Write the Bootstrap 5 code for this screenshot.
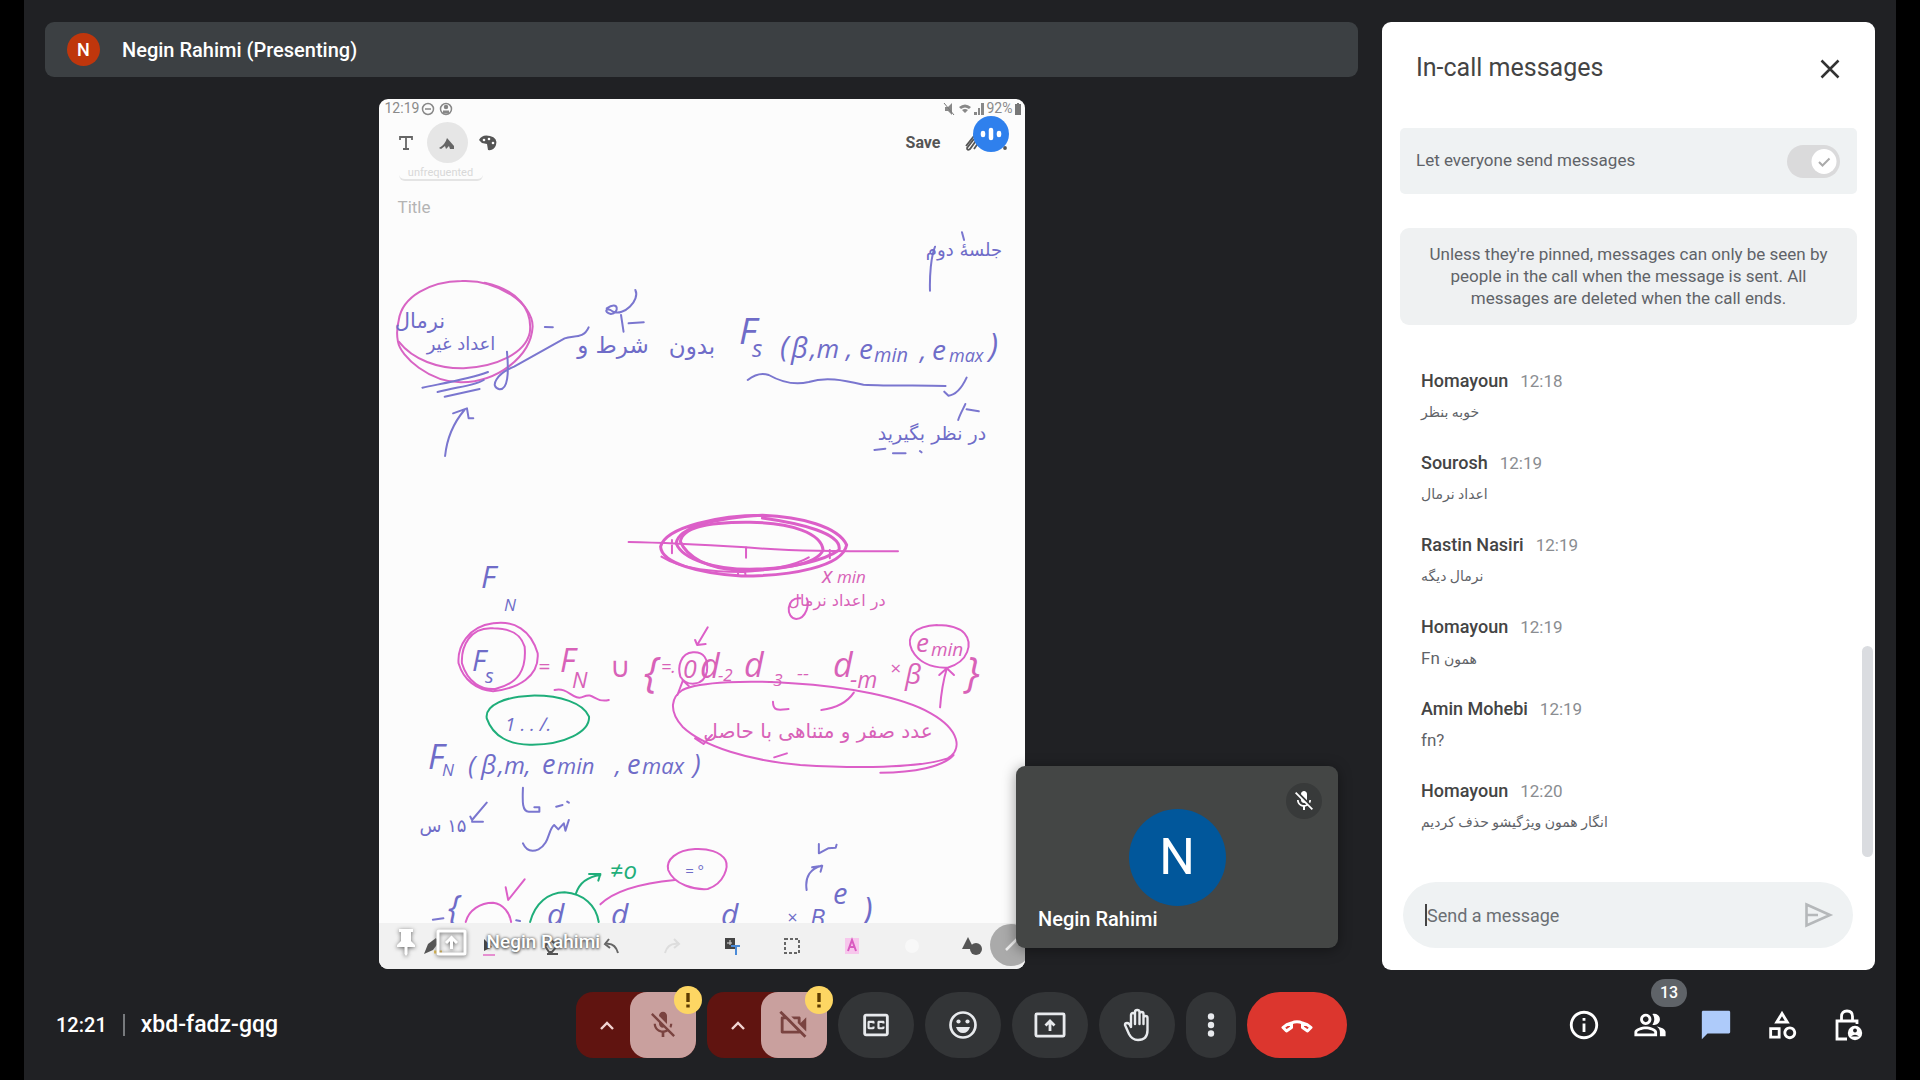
<!DOCTYPE html>
<html lang="en">
<head>
<meta charset="utf-8">
<meta name="viewport" content="width=device-width, initial-scale=1">
<title>Meet - xbd-fadz-gqg</title>
<link href="https://cdn.jsdelivr.net/npm/bootstrap@5.3.0/dist/css/bootstrap.min.css" rel="stylesheet">
<style>
body{background:#000;font-family:Roboto,"DejaVu Sans",sans-serif;color:#3c4043}
.meet{background:#202124;margin:0 24px;padding:0 21px}
.call-main{padding-top:22px;gap:24px}
.stage{gap:22px}
.presenter{background:#3c4043;border-radius:9px;height:55px;padding:0 22px;gap:22px;color:#fff;font-size:20px;font-weight:500}
.initial{width:33px;height:33px;border-radius:50%;background:#bf360c;font-size:18px;font-weight:500}
/* shared tablet screen */
.tablet{aspect-ratio:646/870;width:646px;background:#fcfcfc;border-radius:9px;overflow:hidden;color:#555}
.ink{inset:0;width:100%;height:100%}
.ink .pen{fill:none;stroke-width:2;stroke-linecap:round;stroke-linejoin:round}
.ink .pen path{vector-effect:non-scaling-stroke}
.ink text{font-family:"Open Sans","DejaVu Sans",sans-serif;font-style:italic}
.ink .fa{font-family:"DejaVu Sans",sans-serif;font-style:normal;direction:rtl;text-anchor:middle}
.status{height:19px;padding:0 3px 0 6px;font-size:14px;color:#8a8a8a}
.tabtools{height:49px;padding:0 14px 0 7px;color:#555}
.tabtools button,.tabfoot button{border:0;background:none;padding:0;color:inherit;line-height:1}
.tool-round{width:41px;height:41px;border-radius:50%}
.tool-round.on{background:#e6e6e6!important}
.save-btn{font-size:16px;font-weight:700}
.assist{width:36px;height:36px;border-radius:50%;background:#2f80ed;right:16px;top:17px}
.chip{width:84px;height:14px;margin-left:20px;border-bottom:2px solid #e4e4e4;border-radius:6px;font-size:11px;line-height:12px;color:#d8d8d8}
.note-title{margin:14px 19px;font-size:17px;color:#b4b4b4}
.tabfoot{height:46px;background:#f1f1f1;padding:0 40px 0 43px;color:#555}
.pinrow{left:17px;bottom:13px;gap:20px;color:#fff;font-size:19px;font-weight:500;line-height:28px;text-shadow:0 1px 3px #444,0 0 3px #666}
.pinrow svg{filter:drop-shadow(0 1px 2px #666)}
.round-pen{width:42px;height:42px;border-radius:50%;background:#aaa;right:-7px;bottom:3px}
/* self view */
.selfview{right:20px;bottom:22px;width:322px;height:182px;background:#444645;border-radius:9px;box-shadow:0 2px 14px #0006;color:#fff}
.selfview .big{width:97px;height:97px;border-radius:50%;background:#01579b;font-size:50px}
.muted{right:16px;top:17px;width:36px;height:36px;border-radius:50%;background:#383a3a}
.selfname{left:22px;bottom:16px;font-size:20px;line-height:26px;font-weight:500}
/* chat panel */
.chat{width:493px;background:#fff;border-radius:9px;padding:0 18px 22px}
.chat-head{padding:27px 17px 0 16px;margin-bottom:42px;height:64px;align-items:flex-start}
.chat-head h1{font-size:25px;line-height:38px;font-weight:400;color:#444}
.x-btn{width:38px;height:38px;border:0;background:none;padding:0;margin-right:-9px;color:#333}
.allow{height:66px;background:#eff2f3;border-radius:5px;padding:0 17px 0 16px;margin-bottom:34px;font-size:17px;color:#5f6368}
.allow .form-check-input{width:53px;height:33px;margin:0;border:0;border-radius:17px;background-color:#dadadb;background-size:53px 33px;background-position:center;
background-image:url("data:image/svg+xml,%3Csvg xmlns='http://www.w3.org/2000/svg' viewBox='0 0 53 33'%3E%3Ccircle cx='37' cy='16.5' r='12.5' fill='%23fff'/%3E%3Cpath d='M32 17l3.5 3.5 7-7' fill='none' stroke='%23aaa' stroke-width='2'/%3E%3C/svg%3E")!important}
.notice{background:#eff1f2;border-radius:9px;padding:15px 16px 16px;font-size:17px;line-height:22px;text-align:center;color:#5f6368;margin-bottom:43px}
.feed{padding:0 21px}
.msg{margin-bottom:32px;line-height:25px;height:50px}
.who{font-size:18px;font-weight:500;color:#444}
.msg time{font-size:17px;color:#8a8d91;margin-left:12px}
.body-txt{font-size:17px;color:#5f6368;padding-top:6px}
.body-txt[lang=fa],.body-txt [lang=fa]{font-size:14px}
.thumb{width:11px;height:211px;border-radius:6px;background:#dadce0;right:2px;bottom:113px}
.compose{height:66px;border-radius:33px;background:#eff2f3;margin:0 4px 0 3px;padding:0 18px 0 22px}
.compose .bar{width:2px;height:22px;background:#444}
.compose input{border:0;background:none;outline:0;padding:0;font-size:18px;min-width:0}
.compose input::placeholder{color:#6b6f73;opacity:1}
.compose button{border:0;background:none;padding:0}
/* bottom bar */
.dock{height:110px;color:#fff}
.dock-side{flex:1 1 0}
.clock{font-size:20px;font-weight:500;padding-left:11px}
.clock i{width:2px;height:22px;background:#777a7d;margin:0 16px}
.room-code{font-size:23px}
.ctl{gap:11px}
.ctl button,.right-tools button{border:0;padding:0;color:#e8eaed}
.pair{width:120px;height:66px;background:#601410;border-radius:17px}
.ctl .pair .arrow{width:54px;padding-left:8px;background:none;color:#f2d4d2}
.ctl .pair .off{width:66px;height:66px;background:#c9a09e;border-radius:17px;color:#7a4340}
.warn{width:28px;height:28px;border-radius:50%;background:#fdd663;right:-6px;top:-6px}
.pill{width:76px;height:66px;border-radius:33px;background:#333537}
.pill.slim{width:50px;border-radius:25px}
.ctl .hang{width:100px;height:66px;border-radius:33px;background:#dc362e;color:#fff}
.right-tools{padding-right:9px;gap:30px}
.right-tools button{width:36px;height:36px;background:none;color:#fff}
.count{font-size:16px;font-weight:500;background:#5f6368;border-radius:14px;height:28px;width:36px;line-height:28px;left:19px;top:-28px}
</style>
<script src="https://cdn.jsdelivr.net/npm/bootstrap@5.3.0/dist/js/bootstrap.bundle.min.js"></script>
</head>
<body>
<svg width="0" height="0" class="position-absolute" aria-hidden="true">
<symbol id="micoff" viewBox="0 0 24 24"><path fill="currentColor" d="M19 11h-1.7c0 .74-.16 1.43-.43 2.05l1.23 1.23c.56-.98.9-2.09.9-3.28zm-4.02.17c0-.06.02-.11.02-.17V5c0-1.66-1.34-3-3-3S9 3.34 9 5v.18l5.98 5.99zM4.27 3L3 4.27l6.01 6.01V11c0 1.66 1.33 3 2.99 3 .22 0 .44-.03.65-.08l1.66 1.66c-.71.33-1.5.52-2.31.52-2.76 0-5.3-2.1-5.3-5.1H5c0 3.41 2.72 6.23 6 6.72V21h2v-3.28c.91-.13 1.77-.45 2.54-.9L19.73 21 21 19.73 4.27 3z"/></symbol>
<symbol id="up" viewBox="0 0 16 10"><path d="M2 8l6-6 6 6" fill="none" stroke="currentColor" stroke-width="2.4"/></symbol>
<symbol id="bang" viewBox="0 0 28 28"><path d="M14 7v9M14 18.500v3" stroke="#5c3b00" stroke-width="3.400"/></symbol>
</svg>

<div class="meet min-vh-100 d-flex flex-column">
<main class="call-main d-flex flex-grow-1">
  <section class="stage d-flex flex-column flex-grow-1 position-relative">
    <header class="presenter d-flex align-items-center"><span class="initial d-flex align-items-center justify-content-center">N</span><span>Negin Rahimi (Presenting)</span></header>

    <div class="tablet position-relative d-flex flex-column mx-auto">
      <svg class="ink position-absolute" viewBox="378 99 646 870" role="img" aria-label="Handwritten lecture notes">
        <!-- upper half -->
        <g class="pen" transform="translate(370 90) scale(.42092 .33333)">
          <g stroke="#d864c4">
            <path d="M66 690C74 620 140 574 215 573C300 568 385 640 384 710C380 800 300 876 215 877C140 878 70 800 64 755C60 730 62 710 66 690"/>
            <path d="M66 755C100 810 160 836 220 835C300 830 365 790 377 730C385 660 350 600 270 578"/>
          </g>
          <g stroke="#7a76cf">
            <path d="M122 893C170 880 230 868 278 846M158 906C210 890 250 885 268 870M175 920L258 897"/>
            <path d="M176 1098C180 1050 195 1000 222 960M195 970L228 955L232 985L243 985"/>
            <path d="M323 785C328 850 325 900 305 898C280 890 300 850 340 830L460 745C480 735 505 748 517 712"/>
            <path d="M413 711L432 712M560 655C590 630 590 670 570 672C550 665 560 650 575 665C600 680 640 630 628 600M594 675L600 725M612 700L648 697"/>
            <path d="M895 870C915 850 930 848 945 855C980 880 1010 885 1040 876C1080 860 1120 870 1170 884C1230 888 1300 886 1365 888M1415 863C1405 890 1390 915 1372 917L1362 905"/>
            <path d="M1340 470C1330 500 1327 560 1328 602M1404 427L1409 450M1395 990C1400 970 1410 950 1412 942M1415 958L1444 964"/>
            <path d="M1196 1080L1222 1076M1240 1090L1270 1090M1304 1083L1308 1087"/>
          </g>
        </g>
        <g fill="#6f6cc8">
          <text class="fa" x="963" y="256" font-size="18">جلسهٔ دوم</text>
          <text class="fa" x="419" y="328" font-size="21">نرمال</text>
          <text class="fa" x="460" y="350" font-size="18">اعداد غیر</text>
          <text class="fa" x="691" y="354" font-size="23">بدون</text>
          <text class="fa" x="612" y="353" font-size="23">شرط و</text>
          <text class="fa" x="931" y="440" font-size="19">در نظر بگیرید</text>
          <text x="738" y="344" font-size="37">F<tspan x="751" y="357" font-size="24">s</tspan></text>
          <text x="779" y="357" font-size="30">(</text><text x="790" y="358" font-size="29">β</text><text x="809" y="358" font-size="26">,m</text><text x="845" y="358" font-size="26">,</text>
          <text x="858" y="359" font-size="28">e</text><text x="873" y="362" font-size="20">min</text><text x="919" y="360" font-size="26">,</text><text x="931" y="360" font-size="28">e</text><text x="948" y="362" font-size="18">max</text><text x="988" y="357" font-size="32">)</text>
        </g>
        <!-- lower half -->
        <g class="pen" transform="translate(370 490) scale(.42092 .33333)">
          <g stroke="#dc5fc8">
            <path d="M612 156C700 158 800 165 890 172C1000 184 1120 184 1252 184M891 172L891 203M715 150L715 190M1090 180L1090 205"/>
            <path stroke-width="3" d="M930 76C830 76 700 110 688 170C690 220 780 250 880 258C1000 258 1120 230 1130 165C1110 110 1020 80 930 76C820 84 730 110 725 160C740 210 820 238 900 238C1000 236 1080 210 1112 180C1120 130 1020 100 930 84"/>
            <path stroke-width="3" d="M735 155C740 110 810 96 900 97C1000 98 1070 130 1074 180C1060 225 960 244 870 240C800 236 750 200 735 155"/>
            <path d="M690 200C740 240 820 245 880 246C940 244 1010 225 1040 202M872 240L872 258L890 258L888 240"/>
            <path d="M290 400C230 410 205 470 208 520C220 570 250 600 290 604C350 595 400 560 396 490C380 420 340 390 290 400M290 415C235 410 214 470 216 520C230 580 265 600 295 597C350 580 370 540 365 470C355 430 330 415 290 415"/>
            <path d="M436 600C470 590 480 635 505 620C530 605 530 640 565 630M800 412L775 465L770 450M775 465L795 462"/>
            <path d="M765 487C735 490 728 530 735 560C750 590 790 590 798 545C802 505 790 485 765 487M740 575L728 615M740 570L755 588"/>
            <path d="M1345 405C1290 408 1270 440 1285 480C1300 515 1330 535 1370 533C1420 515 1430 460 1410 430C1395 410 1370 405 1345 405M1352 652C1355 600 1360 570 1368 535M1350 555L1368 535L1385 555"/>
            <path d="M740 600C780 575 900 570 1000 580C1130 590 1260 620 1330 670C1400 720 1405 780 1370 805C1300 835 1150 835 1020 825C900 812 790 770 740 710C705 660 715 620 740 600M1210 848C1290 848 1360 830 1384 795M1147 608C1130 640 1100 655 1070 660M955 635C955 665 970 660 992 657M958 802L988 790M770 745L790 762L810 735"/>
            <path d="M1020 325C985 320 985 385 1010 387C1035 385 1042 340 1035 325"/>
            <path d="M225 1296C232 1260 260 1238 290 1238C315 1242 330 1270 333 1296M320 1192L326 1230L365 1168"/>
            <path d="M770 1077C725 1080 700 1110 706 1140C720 1185 770 1200 800 1197C840 1180 850 1130 842 1110C830 1085 800 1075 770 1077M545 1243C580 1200 640 1180 722 1170"/>
          </g>
          <g stroke="#1fae7a">
            <path d="M380 617C320 620 270 645 275 685C290 740 330 765 380 764C460 765 520 725 518 680C505 640 450 615 380 617"/>
            <path d="M378 1296C390 1240 420 1208 460 1207C505 1212 535 1245 541 1296M487 1210C495 1180 515 1160 545 1155M518 1152L545 1152L540 1172"/>
          </g>
          <g stroke="#7a76cf">
            <path d="M275 938L240 990L236 980M240 995L266 995M361 893C360 930 358 965 375 965L400 965L400 952L388 952M440 950L455 945M466 935L470 938"/>
            <path d="M361 1060C370 1085 385 1085 398 1078C425 1060 420 1020 435 1005L445 1018L458 1000L462 1022L470 990M1035 1200C1030 1160 1045 1135 1070 1127M1048 1132L1072 1127L1068 1145M1064 1062L1064 1090L1086 1075L1104 1073L1106 1064"/>
            <path d="M147 1289L172 1285M345 1291L354 1293"/>
          </g>
        </g>
        <g fill="#6f6cc8">
          <text x="480" y="588" font-size="31">F</text><text x="503" y="611" font-size="17">N</text>
          <text x="471" y="671" font-size="29">F<tspan x="484" y="683" font-size="20">s</tspan></text>
          <text x="504" y="731" font-size="19">1 . . ∕.</text>
          <text x="427" y="769" font-size="34">F<tspan x="441" y="776" font-size="17">N</tspan></text>
          <text x="467" y="774" font-size="26">(</text><text x="480" y="774" font-size="26">β</text><text x="497" y="774" font-size="24">,m,</text><text x="541" y="774" font-size="27">e</text><text x="556" y="774" font-size="22">min</text><text x="614" y="774" font-size="24">,</text><text x="626" y="774" font-size="27">e</text><text x="641" y="774" font-size="22">max</text><text x="692" y="774" font-size="27">)</text>
          <text class="fa" x="442" y="832" font-size="18">۱۵ س</text>
          <text x="447" y="920" font-size="34">{</text><text x="546" y="925" font-size="30">d</text><text x="610" y="925" font-size="30">d</text><text x="720" y="925" font-size="30">d</text><text x="786" y="924" font-size="18">×</text><text x="809" y="927" font-size="25">B</text><text x="832" y="904" font-size="29">e</text><text x="862" y="922" font-size="34">)</text>
          <text x="684" y="876" font-size="15">= °</text>
        </g>
        <text x="609" y="879" font-size="24" fill="#1fae7a">≠o</text>
        <g fill="#d862b8">
          <text x="821" y="583" font-size="22">x</text><text x="836" y="583" font-size="17">min</text>
          <text class="fa" x="836" y="606" font-size="16">در اعداد نرمال</text>
          <text x="537" y="674" font-size="21">=</text><text x="559" y="672" font-size="32">F<tspan x="571" y="688" font-size="22">N</tspan></text><text x="609" y="677" font-size="28">∪</text>
          <text x="643" y="687" font-size="42">{</text><text x="660" y="673" font-size="18">=.</text><text x="682" y="678" font-size="25">0</text><text x="699" y="678" font-size="34">d</text><text x="717" y="681" font-size="17">-2</text><text x="743" y="677" font-size="34">d</text><text x="767" y="686" font-size="17">-3</text><text x="796" y="680" font-size="19">--</text><text x="832" y="677" font-size="34">d</text><text x="849" y="688" font-size="23">-m</text><text x="889" y="675" font-size="19">×</text><text x="904" y="684" font-size="28">β<tspan x="915" y="652" font-size="26">e</tspan><tspan x="930" y="656" font-size="19">min</tspan></text><text x="964" y="687" font-size="42">}</text>
          <text class="fa" x="817" y="738" font-size="20">عدد صفر و متناهی با حاصل</text>
        </g>
      </svg>
      <div class="status d-flex align-items-center justify-content-between">
        <span class="d-flex align-items-center"><span>12:19</span>
          <svg width="38" height="16" viewBox="0 0 38 16" fill="none" stroke="#888" stroke-width="1.500"><circle cx="9" cy="8" r="5.500"/><path d="M6 8h6"/><circle cx="27" cy="8" r="5.500"/><circle cx="27" cy="6" r="1.500" fill="#777"/><path d="M24 11h6" stroke-width="3"/></svg></span>
        <span class="d-flex align-items-center"><svg width="44" height="14" viewBox="0 0 44 14" fill="#888"><path d="M2 5h3l4-4v12L5 9H2zM16 5q6-5 12 0l-2 2q-4-3-8 0zM19 8q3-2 6 0l-3 3zM31 13h3v-3h-3zM35 13h2V6h-2zM38 13h3V1h-3z"/><path d="M1 1l10 12" stroke="#777"/></svg><span>92%</span><svg width="9" height="14"><path d="M2 2h2V1h2v1h2v11H2z" fill="#777"/></svg></span>
      </div>
      <div class="tabtools d-flex align-items-center justify-content-between">
        <div class="d-flex">
          <button class="tool-round" aria-label="Text"><svg width="16" height="16" viewBox="0 0 16 16" fill="none" stroke="#666" stroke-width="1.800"><path d="M2 5V2h12v3M8 2v12M5 14h6"/></svg></button>
          <button class="tool-round on" aria-label="Draw"><svg width="18" height="16" viewBox="0 0 18 16"><path d="M1 13Q7 10 9 3l7 8v3h-4l-1-3-3 3-1-3-4 3z" fill="#666"/></svg></button>
          <button class="tool-round" aria-label="Palette"><svg width="20" height="18" viewBox="0 0 20 18"><path d="M1 6Q4 0 12 2q8 2 6 9-2 6-8 5l-1-6-5-1z" fill="#555"/><g fill="#fff"><circle cx="6" cy="6" r="1.300"/><circle cx="11" cy="5" r="1.300"/><circle cx="15" cy="9" r="1.300"/></g></svg></button>
        </div>
        <div class="d-flex align-items-center"><button class="save-btn me-4">Save</button>
          <svg width="46" height="22" viewBox="0 0 46 22" fill="none" stroke="#555" stroke-width="1.800"><path d="M1 14L9 4q4-2 4 2L5 17q-3 2-3-1l7-9M9 17l7-10"/><circle cx="40" cy="16" r="1"/></svg></div>
      </div>
      <div class="chip text-center">unfrequented</div>
      <div class="note-title">Title</div>
      <div class="assist position-absolute"><svg class="d-block" width="36" height="36" viewBox="0 0 36 36" stroke="#fff" stroke-width="4.500" stroke-linecap="round"><path d="M10 17v2M18 14v8M26 17v2"/></svg></div>

      <div class="tabfoot mt-auto d-flex align-items-center justify-content-between position-relative">
        <button aria-label="Pen"><svg width="22" height="20" viewBox="0 0 22 20"><path d="M2 18L6 8l8-6 3 4-6 8z" fill="#555"/><path d="M12 16h8" stroke="#eac14d" stroke-width="3"/></svg></button>
        <button aria-label="Marker"><svg width="22" height="20" viewBox="0 0 22 20"><path d="M3 15V3l8 8z" fill="#444"/><path d="M2 19h12" stroke="#e58fd0" stroke-width="2"/></svg></button>
        <button aria-label="Eraser"><svg width="22" height="20" viewBox="0 0 22 20"><path d="M4 10l6-6 6 6-5 6H8zM6 18h11" fill="none" stroke="#555" stroke-width="2"/></svg></button>
        <button aria-label="Undo"><svg width="22" height="20" viewBox="0 0 22 20" fill="none" stroke="#666" stroke-width="2"><path d="M8 3L4 8l5 4M4 8q10-2 13 9"/></svg></button>
        <button aria-label="Redo"><svg width="22" height="20" viewBox="0 0 22 20" fill="none" stroke="#ddd" stroke-width="2"><path d="M13 3l5 5-5 4M18 8Q7 6 4 17"/></svg></button>
        <button aria-label="Convert"><svg width="22" height="22" viewBox="0 0 22 22"><path d="M4 3h10v11H4z" fill="#444"/><path d="M6 8h5M9 5v5" stroke="#ddd"/><path d="M10 11h9M15 11v9" stroke="#4b8bd8" stroke-width="2"/></svg></button>
        <button aria-label="Select"><svg width="22" height="20" viewBox="0 0 22 20"><path d="M4 3h14v14H4z" fill="none" stroke="#666" stroke-width="2" stroke-dasharray="3 2"/></svg></button>
        <button aria-label="Style"><svg width="22" height="22" viewBox="0 0 22 22"><path d="M4 3h14v16H4z" fill="#f7c6ec"/><path d="M7 16l4-11 4 11M8 12h6" fill="none" stroke="#d95bc0" stroke-width="2"/></svg></button>
        <button aria-label="Colour"><svg width="22" height="20" viewBox="0 0 22 20"><circle cx="11" cy="10" r="7" fill="#f8f8f8"/></svg></button>
        <button aria-label="Shapes"><svg width="24" height="22" viewBox="0 0 24 22" fill="#555"><path d="M8 2l6 12H2z"/><circle cx="16" cy="14" r="6"/></svg></button>
        <span class="round-pen position-absolute"><svg width="42" height="42" viewBox="0 0 42 42"><path d="M16 26L27 15" stroke="#eee" stroke-width="2.500"/></svg></span>
      </div>
      <div class="pinrow position-absolute d-flex align-items-center">
        <svg width="20" height="28" viewBox="0 0 20 28" fill="#fff"><path d="M3 1h14v3h-2v9l4 4v2h-7.500v7L10 28l-1.500-2v-7H1v-2l4-4V4H3z"/></svg>
        <svg width="31" height="27" viewBox="0 0 31 27" fill="none" stroke="#fff" stroke-width="3"><rect x="2" y="2" width="27" height="23" rx="1"/><path d="M15.500 20V9M10 14l5.500-5.500L21 14"/></svg>
        <span>Negin Rahimi</span>
      </div>
    </div>

    <div class="selfview position-absolute d-flex align-items-center justify-content-center">
      <span class="big d-flex align-items-center justify-content-center">N</span>
      <span class="muted position-absolute d-flex align-items-center justify-content-center"><svg width="24" height="24"><use href="#micoff"/></svg></span>
      <span class="selfname position-absolute">Negin Rahimi</span>
    </div>
  </section>

  <aside class="chat d-flex flex-column flex-shrink-0 position-relative">
    <div class="chat-head d-flex justify-content-between"><h1 class="m-0">In-call messages</h1>
      <button class="x-btn" aria-label="Close"><svg width="20" height="20" viewBox="0 0 20 20"><path d="M1.500 1.500l17 17M18.500 1.500l-17 17" stroke="currentColor" stroke-width="2.500"/></svg></button></div>
    <div class="allow d-flex align-items-center justify-content-between"><label for="allow">Let everyone send messages</label><input class="form-check-input" type="checkbox" role="switch" id="allow" checked></div>
    <p class="notice">Unless they're pinned, messages can only be seen by people in the call when the message is sent. All messages are deleted when the call ends.</p>
    <div class="feed">
      <div class="msg"><span class="who">Homayoun</span><time>12:18</time><div class="body-txt" lang="fa">خوبه بنظر</div></div>
      <div class="msg"><span class="who">Sourosh</span><time>12:19</time><div class="body-txt" lang="fa">اعداد نرمال</div></div>
      <div class="msg"><span class="who">Rastin Nasiri</span><time>12:19</time><div class="body-txt" lang="fa">نرمال دیگه</div></div>
      <div class="msg"><span class="who">Homayoun</span><time>12:19</time><div class="body-txt">Fn <span lang="fa">همون</span></div></div>
      <div class="msg"><span class="who">Amin Mohebi</span><time>12:19</time><div class="body-txt">fn?</div></div>
      <div class="msg"><span class="who">Homayoun</span><time>12:20</time><div class="body-txt" lang="fa">انگار همون ویژگیشو حذف کردیم</div></div>
    </div>
    <div class="thumb position-absolute"></div>
    <form class="compose d-flex align-items-center mt-auto"><span class="bar"></span><input class="flex-grow-1" type="text" placeholder="Send a message" aria-label="Send a message">
      <button type="button" aria-label="Send"><svg width="32" height="28" viewBox="0 0 32 28" fill="none" stroke="#b5b8ba" stroke-width="2.600"><path d="M3.500 3.500L27 14 3.500 24.500zM4 14h11"/></svg></button></form>
  </aside>
</main>

<footer class="dock d-flex align-items-center">
  <div class="dock-side clock d-flex align-items-center"><span>12:21</span><i></i><span class="room-code">xbd-fadz-gqg</span></div>
  <div class="ctl d-flex">
    <div class="pair d-flex position-relative"><button class="arrow" aria-label="Audio settings"><svg width="16" height="10"><use href="#up"/></svg></button><button class="off" aria-label="Microphone"><svg width="32" height="32"><use href="#micoff"/></svg></button><svg class="warn position-absolute"><use href="#bang"/></svg></div>
    <div class="pair d-flex position-relative"><button class="arrow" aria-label="Video settings"><svg width="16" height="10"><use href="#up"/></svg></button><button class="off" aria-label="Camera"><svg width="35" height="34" viewBox="0 0 24 24" fill="currentColor"><path d="M9.560 8l-2-2-4.150-4.140L2 3.270 4.730 6H4c-.55 0-1 .45-1 1v10c0 .55.45 1 1 1h12c.21 0 .39-.08.55-.18L19.730 21l1.410-1.410-8.860-8.860L9.560 8zM5 16V8h1.730l8 8H5zm10-8v2.610l6 6V6.500l-4 4V7c0-.55-.45-1-1-1h-5.610l2 2H15z"/></svg></button><svg class="warn position-absolute"><use href="#bang"/></svg></div>
    <button class="pill" aria-label="Captions"><svg width="34" height="34" viewBox="0 0 24 24" fill="currentColor"><path d="M19 4H5c-1.110 0-2 .9-2 2v12c0 1.100.89 2 2 2h14c1.100 0 2-.9 2-2V6c0-1.100-.9-2-2-2zm0 14H5V6h14v12zM7 15h3c.55 0 1-.45 1-1v-1H9.500v.5h-2v-3h2v.5H11v-1c0-.55-.45-1-1-1H7c-.55 0-1 .45-1 1v4c0 .55.45 1 1 1zm7 0h3c.55 0 1-.45 1-1v-1h-1.500v.5h-2v-3h2v.5H18v-1c0-.55-.45-1-1-1h-3c-.55 0-1 .45-1 1v4c0 .55.45 1 1 1z"/></svg></button>
    <button class="pill" aria-label="Reactions"><svg width="30" height="30" viewBox="0 0 30 30" fill="currentColor"><circle cx="15" cy="15" r="12.500" fill="none" stroke="currentColor" stroke-width="2.700"/><circle cx="10.500" cy="11.500" r="2.100"/><circle cx="19.500" cy="11.500" r="2.100"/><path d="M8 17h14q-2 6-7 6t-7-6z"/></svg></button>
    <button class="pill" aria-label="Present"><svg width="32" height="26" viewBox="0 0 32 26" fill="none" stroke="currentColor" stroke-width="2.800"><rect x="1.900" y="1.900" width="28.200" height="22.200" rx="1"/><path d="M16 19v-9M11.500 13.500L16 9l4.500 4.500"/></svg></button>
    <button class="pill" aria-label="Raise hand"><svg width="28" height="34" viewBox="0 0 28 34" fill="none" stroke="currentColor" stroke-width="2.400" stroke-linejoin="round" stroke-linecap="round"><path d="M8 19V7q0-2 2-2t2 2v9V4q0-2 2.200-2T16.500 4v12V6q0-2 2-2t2 2v10V10q0-2 2-2t2 2v12q0 10-9.500 10Q9 32 6 26L2 17q0-2 2-2 2.500 0 4 4z"/></svg></button>
    <button class="pill slim" aria-label="More"><svg width="8" height="24" viewBox="0 0 8 24" fill="currentColor"><circle cx="4" cy="3.500" r="3.200"/><circle cx="4" cy="12" r="3.200"/><circle cx="4" cy="20.500" r="3.200"/></svg></button>
    <button class="hang" aria-label="Leave call"><svg width="32" height="16" viewBox="0 0 32 16" fill="none" stroke="currentColor" stroke-width="3" stroke-linejoin="round"><path d="M10.500 5Q16 2.600 21.500 5M10.500 5v4.500L5.500 13 2 9.500Q5.500 6 10.500 5zM21.500 5v4.500l5 3.500L30 9.500Q26.500 6 21.500 5z"/></svg></button>
  </div>
  <div class="dock-side right-tools d-flex justify-content-end">
    <button aria-label="Meeting details"><svg width="34" height="34" viewBox="0 0 24 24" fill="currentColor"><path d="M11 7h2v2h-2zm0 4h2v6h-2zm1-9C6.480 2 2 6.480 2 12s4.480 10 10 10 10-4.480 10-10S17.520 2 12 2zm0 18c-4.410 0-8-3.590-8-8s3.590-8 8-8 8 3.590 8 8-3.590 8-8 8z"/></svg></button>
    <button class="position-relative" aria-label="People"><svg width="34" height="34" viewBox="0 0 24 24" fill="currentColor"><path d="M16.670 13.130C18.040 14.060 19 15.320 19 17v3h4v-3c0-2.180-3.570-3.470-6.330-3.870zM15 12c2.210 0 4-1.790 4-4s-1.790-4-4-4c-.47 0-.91.1-1.330.24C14.500 5.270 15 6.580 15 8s-.5 2.730-1.330 3.760c.42.14.86.24 1.330.24zM9 12c2.210 0 4-1.790 4-4s-1.790-4-4-4-4 1.790-4 4 1.790 4 4 4zm0-6c1.100 0 2 .9 2 2s-.9 2-2 2-2-.9-2-2 .9-2 2-2zm0 7c-2.670 0-8 1.340-8 4v3h16v-3c0-2.660-5.330-4-8-4zm6 5H3v-.99C3.200 16.290 6.300 15 9 15s5.800 1.290 6 2v1z"/></svg><span class="count position-absolute">13</span></button>
    <button aria-label="Chat"><svg width="34" height="34" viewBox="0 0 24 24" fill="#aecbfa"><path d="M21 2H3c-.6 0-1 .4-1 1v19l4-4h15c.6 0 1-.4 1-1V3c0-.6-.4-1-1-1z"/></svg></button>
    <button aria-label="Activities"><svg width="34" height="34" viewBox="0 0 24 24" fill="currentColor"><path d="M12 2l-5.500 9h11L12 2zm0 3.840L13.930 9h-3.870L12 5.840zM17.500 13c-2.490 0-4.500 2.010-4.500 4.500s2.010 4.500 4.500 4.500 4.500-2.010 4.500-4.500-2.010-4.500-4.500-4.500zm0 7c-1.380 0-2.500-1.120-2.500-2.500s1.120-2.500 2.500-2.500 2.500 1.120 2.500 2.500-1.120 2.500-2.500 2.500zM3 21.500h8v-8H3v8zm2-6h4v4H5v-4z"/></svg></button>
    <button aria-label="Host controls"><svg width="30" height="34" viewBox="0 0 30 34"><path d="M14 31H4V13h20v3M8.500 13V8.500Q8.500 3 14 3t5.500 5.500V13" fill="none" stroke="#fff" stroke-width="2.800"/><circle cx="22" cy="25" r="7.200" fill="#fff"/><circle cx="22" cy="22.500" r="1.900" fill="#202124"/><path d="M18 28.500q4-3.500 8 0z" fill="#202124"/></svg></button>
  </div>
</footer>
</div>
</body>
</html>
